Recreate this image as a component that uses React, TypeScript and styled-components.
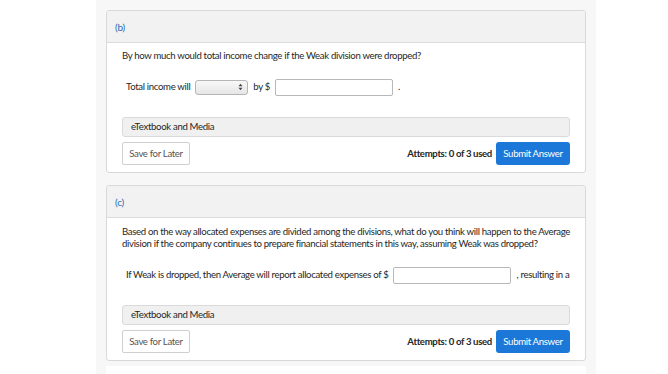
import React from "react";
import styled, { createGlobalStyle } from "styled-components";

const Global = createGlobalStyle`
  html, body { margin: 0; padding: 0; background: #ffffff; }
  body { font-family: Lato, "Open Sans", sans-serif; color: #333; }
`;

const Page = styled.div`
  width: 668px;
  height: 374px;
  overflow: hidden;
  display: flex;
  justify-content: flex-start;
`;

const Column = styled.div`
  margin-left: 96px;
  width: 500px;
  background: #f7f7f7;
  padding: 10px 10px 0 10px;
  box-sizing: border-box;
  display: flex;
  flex-direction: column;
  gap: 12px;
`;

const Card = styled.section`
  background: #fff;
  border: 1px solid #d9d9d9;
  border-radius: 3px;
  width: 480px;
  box-sizing: border-box;
`;

const Header = styled.div`
  height: 31px;
  background: #f2f2f2;
  border-bottom: 1px solid #dcdcdc;
  display: flex;
  align-items: center;
  padding-left: 8px;
  font-size: 10px;
  letter-spacing: -0.2px;
  color: #2b6cb5;
  border-radius: 3px 3px 0 0;
`;

const Body = styled.div<{ $top: number }>`
  padding: ${(p) => p.$top}px 15px 7px 15px;
  font-size: 9.6px;
  letter-spacing: -0.33px;
  line-height: 12px;
  color: #262626;
`;

const Question = styled.p`
  margin: 0;
`;

const Row = styled.div<{ $top: number }>`
  display: flex;
  align-items: center;
  white-space: nowrap;
  margin-top: ${(p) => p.$top}px;
  padding-left: 4px;
  height: 18px;
`;

const Select = styled.div`
  width: 53px;
  height: 15px;
  border: 1px solid #b5b5b5;
  border-radius: 3px;
  background: linear-gradient(#f8f8f8, #e6e6e6);
  margin: 0 5px 0 5px;
  display: flex;
  align-items: center;
  justify-content: flex-end;
  padding-right: 4px;
  box-sizing: border-box;
`;

const Input = styled.div<{ $w: number }>`
  width: ${(p) => p.$w}px;
  flex: none;
  height: 17px;
  border: 1px solid #b8b8b8;
  border-radius: 2px;
  background: #fff;
  margin: 0 5px;
  box-sizing: border-box;
`;

const Media = styled.div<{ $top: number }>`
  margin-top: ${(p) => p.$top}px;
  height: 18px;
  background: #f0f0f0;
  border: 1px solid #dadada;
  border-radius: 3px;
  display: flex;
  align-items: center;
  padding-left: 8px;
`;

const Actions = styled.div`
  margin-top: 5px;
  display: flex;
  align-items: center;
`;

const SaveButton = styled.button`
  height: 23px;
  width: 68px;
  padding: 0;
  border: 1px solid #cfcfcf;
  border-radius: 2px;
  background: #fff;
  font-family: Lato, sans-serif;
  font-size: 9.6px;
  letter-spacing: -0.33px;
  color: #555;
`;

const Attempts = styled.span`
  margin-left: auto;
  font-weight: 700;
  margin-right: 4px;
`;

const SubmitButton = styled.button`
  height: 23px;
  width: 74px;
  border: none;
  border-radius: 3px;
  background: #1b78d8;
  color: #fff;
  font-family: Lato, sans-serif;
  font-size: 9.6px;
  letter-spacing: -0.33px;
  padding: 0;
`;

const Tail = styled.div`
  width: 480px;
  height: 20px;
  margin-top: -7px;
  background: #fff;
`;

const Arrows = () => (
  <svg width="5" height="8" viewBox="0 0 5 8">
    <path d="M0.5 3.2 L2.5 0.8 L4.5 3.2 Z" fill="#444" />
    <path d="M0.5 4.8 L2.5 7.2 L4.5 4.8 Z" fill="#444" />
  </svg>
);

export default function App() {
  return (
    <Page>
      <Global />
      <Column>
        <Card>
          <Header>(b)</Header>
          <Body $top={7}>
            <Question>By how much would total income change if the Weak division were dropped?</Question>
            <Row $top={16}>
              Total income will
              <Select>
                <Arrows />
              </Select>
              by $
              <Input $w={118} />
              .
            </Row>
            <Media $top={21}>eTextbook and Media</Media>
            <Actions>
              <SaveButton>Save for Later</SaveButton>
              <Attempts>Attempts: 0 of 3 used</Attempts>
              <SubmitButton>Submit Answer</SubmitButton>
            </Actions>
          </Body>
        </Card>
        <Card>
          <Header>(c)</Header>
          <Body $top={8}>
            <Question>
              Based on the way allocated expenses are divided among the divisions, what do you think will happen to the Average
              division if the company continues to prepare financial statements in this way, assuming Weak was dropped?
            </Question>
            <Row $top={16}>
              If Weak is dropped, then Average will report allocated expenses of $
              <Input $w={118} />
              , resulting in a
            </Row>
            <Media $top={21}>eTextbook and Media</Media>
            <Actions>
              <SaveButton>Save for Later</SaveButton>
              <Attempts>Attempts: 0 of 3 used</Attempts>
              <SubmitButton>Submit Answer</SubmitButton>
            </Actions>
          </Body>
        </Card>
        <Tail />
      </Column>
    </Page>
  );
}
